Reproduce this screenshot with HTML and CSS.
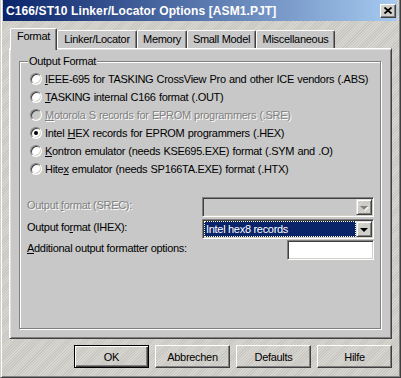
FILE: index.html
```html
<!DOCTYPE html>
<html>
<head>
    <title>C166/ST10 Linker/Locator Options</title>
    <link rel="stylesheet" href="styles.css">
</head>
<body>
    <div class="window">
        <div class="titlebar">
            <span class="title">C166/ST10 Linker/Locator Options [ASM1.PJT]</span>
            <button class="close-btn">
                <svg width="8" height="7" viewBox="0 0 8 7">
                    <path d="M0.5 0.5 L7.5 6.5 M7.5 0.5 L0.5 6.5" stroke="#000" stroke-width="1.8" fill="none"/>
                </svg>
            </button>
        </div>

        <div class="tabs">
            <div class="tab tab-format active">Format</div>
            <div class="tab tab-linker">Linker/Locator</div>
            <div class="tab tab-memory">Memory</div>
            <div class="tab tab-small">Small Model</div>
            <div class="tab tab-misc">Miscellaneous</div>
        </div>

        <div class="panel">
            <div class="group">
                <div class="group-title">Output Format</div>

                <div class="options">
                    <div class="option"><span class="radio"></span><span><u>I</u>EEE-695 for TASKING CrossView Pro and other ICE vendors (.ABS)</span></div>
                    <div class="option"><span class="radio"></span><span><u>T</u>ASKING internal C166 format (.OUT)</span></div>
                    <div class="option disabled"><span class="radio"></span><span><u>M</u>otorola S records for EPROM programmers (.SRE)</span></div>
                    <div class="option"><span class="radio checked"></span><span>Intel <u>H</u>EX records for EPROM programmers (.HEX)</span></div>
                    <div class="option"><span class="radio"></span><span><u>K</u>ontron emulator (needs KSE695.EXE) format (.SYM and .O)</span></div>
                    <div class="option"><span class="radio"></span><span>Hite<u>x</u> emulator (needs SP166TA.EXE) format (.HTX)</span></div>
                </div>

                <div class="fields">
                    <div class="field">
                        <span class="disabled">Output <u>f</u>ormat (SREC):</span>
                        <div class="combo combo-disabled">
                            <div class="combo-value"></div>
                            <div class="combo-btn"><span class="arrow"></span></div>
                        </div>
                    </div>
                    <div class="field">
                        <span>Output fo<u>r</u>mat (IHEX):</span>
                        <div class="combo">
                            <div class="combo-value"><span class="selection">Intel hex8 records</span></div>
                            <div class="combo-btn"><span class="arrow"></span></div>
                        </div>
                    </div>
                    <div class="field field-last">
                        <span><u>A</u>dditional output formatter options:</span>
                        <div class="textbox"></div>
                    </div>
                </div>
            </div>
        </div>

        <div class="buttons">
            <button class="btn default">OK</button>
            <button class="btn">Abbrechen</button>
            <button class="btn">Defaults</button>
            <button class="btn">Hilfe</button>
        </div>
    </div>
</body>
</html>
```
FILE: styles.css
```css
body {
    margin: 0;
    font-family: "Liberation Sans", Arial, sans-serif;
    font-size: 11px;
    letter-spacing: -0.3px;
    color: #000;
}
.window {
    width: 401px;
    height: 378px;
    box-sizing: border-box;
    border-left: 1px solid #d4d0c8;
    border-right: 1px solid #404040;
    border-bottom: 1px solid #404040;
    box-shadow: inset 1px 0 #fff, inset -1px -1px #808080;
    padding: 0 3px 0 2px;
    background: repeating-linear-gradient(135deg, #d8d6d0 0 1px, #c9c7c1 1px 2px);
}
.titlebar {
    height: 21px;
    display: flex;
    align-items: center;
    justify-content: space-between;
    padding-left: 3px;
    background: linear-gradient(to right, #0a246a, #a6caf0);
}
.title {
    color: #fff;
    font-weight: bold;
    font-size: 12px;
    letter-spacing: 0.1px;
    padding-top: 1px;
}
.close-btn {
    width: 16px;
    height: 14px;
    margin-right: 1px;
    padding: 0;
    display: flex;
    align-items: center;
    justify-content: center;
    border: 1px solid;
    border-color: #fff #404040 #404040 #fff;
    box-shadow: inset -1px -1px #808080;
    background: repeating-linear-gradient(135deg, #d8d6d0 0 1px, #c9c7c1 1px 2px);
}

/* tabs */
.tabs {
    display: flex;
    align-items: flex-end;
    height: 20px;
    margin: 7px 0 0 7px;
}
.tab {
    height: 18px;
    box-sizing: border-box;
    border: 1px solid;
    border-bottom: none;
    border-color: #fff #404040 #fff #fff;
    border-radius: 2px 2px 0 0;
    box-shadow: inset -1px 0 #808080;
    background: #c8c8c8;
    text-align: center;
    line-height: 16px;
}
.tab.active {
    height: 22px;
    margin-bottom: -2px;
    line-height: 15px;
    position: relative;
    z-index: 1;
}
.tab-format { width: 47px; }
.tab-linker { width: 80px; }
.tab-memory { width: 50px; }
.tab-small { width: 69px; }
.tab-misc { width: 79px; }

/* panel */
.panel {
    width: 383px;
    height: 291px;
    margin-left: 6px;
    box-sizing: border-box;
    border: 1px solid;
    border-color: #fff #404040 #404040 #fff;
    box-shadow: inset 1px 1px #e0e0e0, inset -1px -1px #808080;
    background: #c8c8c8;
    padding: 12px 10px 9px 9px;
}
.group {
    height: 268px;
    box-sizing: border-box;
    border: 1px solid #808080;
    box-shadow: 1px 1px 0 #fff, inset 1px 1px 0 #fff;
    padding: 0 6px 0 7px;
}
.group-title {
    width: max-content;
    height: 13px;
    line-height: 13px;
    margin: -7px 0 0 1px;
    padding: 0 1px;
    background: #c8c8c8;
}
.options {
    margin-top: 2px;
    padding-left: 3px;
    word-spacing: 0.5px;
    white-space: nowrap;
}
.option {
    display: flex;
    align-items: center;
    height: 18px;
}
.radio {
    flex: none;
    width: 12px;
    height: 12px;
    box-sizing: border-box;
    margin-right: 3px;
    border-radius: 50%;
    border: 1px solid;
    border-color: #808080 #fff #fff #808080;
    box-shadow: inset 1px 1px #404040, inset -1px -1px #d4d0c8;
    background: #fff;
    display: flex;
    align-items: center;
    justify-content: center;
}
.radio.checked::after {
    content: "";
    width: 4px;
    height: 4px;
    border-radius: 50%;
    background: #000;
}
.disabled,
.option.disabled {
    color: #808080;
    text-shadow: 1px 1px #fff;
}
.option.disabled .radio {
    background: #c8c8c8;
}

/* fields */
.fields {
    margin-top: 19px;
}
.field {
    display: flex;
    align-items: center;
    justify-content: space-between;
    height: 20px;
    margin-bottom: 2px;
}
.field span {
    margin-top: -5px;
}
.field-last {
    margin-top: -1px;
}
.combo,
.textbox {
    box-sizing: border-box;
    height: 20px;
    border: 1px solid;
    border-color: #808080 #fff #fff #808080;
    box-shadow: inset 1px 1px #404040, inset -1px -1px #d4d0c8;
    background: #fff;
}
.combo {
    width: 172px;
    display: flex;
    padding: 1px;
}
.combo-disabled {
    background: #c8c8c8;
}
.combo-value {
    flex: 1;
    display: flex;
}
.selection {
    flex: 1;
    margin: 0 !important;
    background: #0a246a;
    color: #fff;
    border: 1px dotted #fff8d0;
    padding-left: 1px;
    line-height: 14px;
}
.combo-btn {
    width: 16px;
    height: 16px;
    box-sizing: border-box;
    border: 1px solid;
    border-color: #e0e0e0 #404040 #404040 #e0e0e0;
    box-shadow: inset 1px 1px #fff, inset -1px -1px #808080;
    background: repeating-linear-gradient(135deg, #d8d6d0 0 1px, #c9c7c1 1px 2px);
    display: flex;
    align-items: center;
    justify-content: center;
}
.arrow {
    width: 0;
    height: 0;
    margin-top: 1px !important;
    border-left: 4px solid transparent;
    border-right: 4px solid transparent;
    border-top: 4px solid #000;
}
.combo-disabled .arrow {
    border-top-color: #808080;
    filter: drop-shadow(1px 1px 0 #fff);
}
.textbox {
    width: 87px;
}

/* buttons */
.buttons {
    display: flex;
    justify-content: flex-end;
    gap: 6px;
    margin: 6px 5px 0 0;
}
.btn {
    width: 75px;
    height: 23px;
    box-sizing: border-box;
    font-family: inherit;
    font-size: 11px;
    letter-spacing: -0.3px;
    color: #000;
    border: 1px solid;
    border-color: #fff #404040 #404040 #fff;
    box-shadow: inset -1px -1px #808080;
    background: repeating-linear-gradient(135deg, #d8d6d0 0 1px, #c9c7c1 1px 2px);
    padding: 0;
}
.btn.default {
    border: 1px solid #000;
    box-shadow: inset 1px 1px #fff, inset -1px -1px #404040, inset -2px -2px #808080;
}
```
